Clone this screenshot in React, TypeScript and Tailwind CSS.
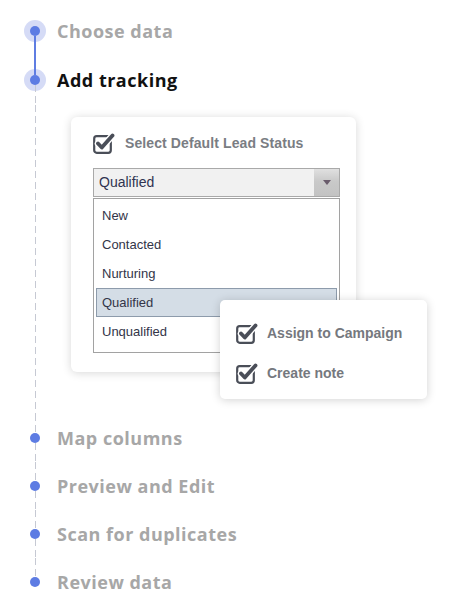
import React from "react";

const items = ["New", "Contacted", "Nurturing", "Qualified", "Unqualified"];

const CheckIcon = () => (
  <svg width="22" height="21" viewBox="0 0 22 21" fill="none" className="shrink-0">
    <rect x="1.2" y="3.2" width="16.6" height="16.6" rx="2.5" stroke="#4a4e58" strokeWidth="2.2" />
    <path d="M5 10.5 L8.8 14.5 L19.5 2.5" stroke="#fff" strokeWidth="6.5" strokeLinecap="round" strokeLinejoin="round" />
    <path d="M5 10.5 L8.8 14.5 L19.5 2.5" stroke="#4a4e58" strokeWidth="3.8" strokeLinecap="round" strokeLinejoin="round" />
  </svg>
);

const Dot = () => <div className="w-[10px] h-[10px] rounded-full bg-[#5d7ce3] shrink-0" />;

const Dashed = () => (
  <div className="w-px flex-1 bg-[repeating-linear-gradient(to_bottom,#c6c9d3_0px,#c6c9d3_7px,transparent_7px,transparent_11px)]" />
);

const stepText = "ml-[11px] flex items-center text-[18px] font-bold tracking-[0.5px]";

// step that comes after the card, dashed line above and below
const Step = ({ label, last }: { label: string; last?: boolean }) => (
  <div className="flex h-[48px]">
    <div className="w-[22px] flex flex-col items-center">
      <Dashed />
      <Dot />
      {last ? <div className="flex-1" /> : <Dashed />}
    </div>
    <div className={stepText + " text-[#a7a7a7]"}>{label}</div>
  </div>
);

export default function App() {
  return (
    <div className="w-[469px] h-[612px] bg-white overflow-hidden pl-[24px] pt-[7px] font-['Open_Sans',sans-serif]">
      {/* Choose data */}
      <div className="flex h-[48px]">
        <div className="w-[22px] flex flex-col items-center">
          <div className="flex-1" />
          <div className="w-[10px] h-[10px] rounded-full bg-[#5d7ce3] ring-[6px] ring-[#d5dbf6] shrink-0" />
          <div className="relative w-[2px] flex-1 bg-[#5f7de2]" />
        </div>
        <div className={stepText + " text-[#a7a7a7]"}>Choose data</div>
      </div>

      {/* Add tracking */}
      <div className="flex h-[50px]">
        <div className="w-[22px] flex flex-col items-center">
          <div className="relative w-[2px] flex-1 bg-[#5f7de2]" />
          <div className="w-[10px] h-[10px] rounded-full bg-[#5d7ce3] ring-[6px] ring-[#d5dbf6] shrink-0" />
          <div className="relative flex-1 flex flex-col">
            <Dashed />
          </div>
        </div>
        <div className={stepText + " text-[#111]"}>Add tracking</div>
      </div>

      {/* tracking options */}
      <div className="flex h-[309px]">
        <div className="w-[22px] flex flex-col items-center">
          <Dashed />
        </div>
        <div className="ml-[25px] pt-[12px]">
          <div className="relative w-[285px] h-[255px] bg-white rounded-[6px] shadow-[0_1px_10px_rgba(0,0,0,0.16)] pl-[22px] pr-[16px] pt-[16px] font-['Liberation_Sans',Arial,sans-serif]">
            <div className="flex items-center gap-[10px]">
              <CheckIcon />
              <span className="text-[14px] font-bold text-[#7a7d83] tracking-[0.1px]">Select Default Lead Status</span>
            </div>

            <div className="mt-[14px] flex h-[29px] border border-[#a9a9a9] bg-[#f1f1f1]">
              <div className="flex-1 flex items-center pl-[5px] text-[14px] text-[#2f3350]">Qualified</div>
              <div className="w-[25px] flex items-center justify-center bg-[linear-gradient(to_bottom,#e0e0e0,#c9c9c9_45%,#c3c3c3)]">
                <div className="w-0 h-0 border-l-[4px] border-r-[4px] border-t-[5px] border-l-transparent border-r-transparent border-t-[#6a5c6c]" />
              </div>
            </div>

            <div className="mt-px border border-[#a2a2a2] bg-white p-[2px] pb-[6px]">
              {items.map((it) => (
                <div
                  key={it}
                  className={
                    it === "Qualified"
                      ? "h-[29px] flex items-center pl-[5px] text-[13px] text-[#333548] bg-[#d4dde6] border border-[#8d9bab]"
                      : "h-[29px] flex items-center pl-[6px] text-[13px] text-[#333548]"
                  }
                >
                  {it}
                </div>
              ))}
            </div>

            {/* popover */}
            <div className="absolute left-[149px] top-[183px] w-[207px] h-[99px] bg-white rounded-[5px] shadow-[0_1px_10px_rgba(0,0,0,0.18)] pl-[16px] pt-[23px] flex flex-col gap-[19px]">
              <div className="flex items-center gap-[9px]">
                <CheckIcon />
                <span className="text-[14px] font-bold text-[#75787e]">Assign to Campaign</span>
              </div>
              <div className="flex items-center gap-[9px]">
                <CheckIcon />
                <span className="text-[14px] font-bold text-[#75787e]">Create note</span>
              </div>
            </div>
          </div>
        </div>
      </div>

      <Step label="Map columns" />
      <Step label="Preview and Edit" />
      <Step label="Scan for duplicates" />
      <Step label="Review data" last />
    </div>
  );
}
